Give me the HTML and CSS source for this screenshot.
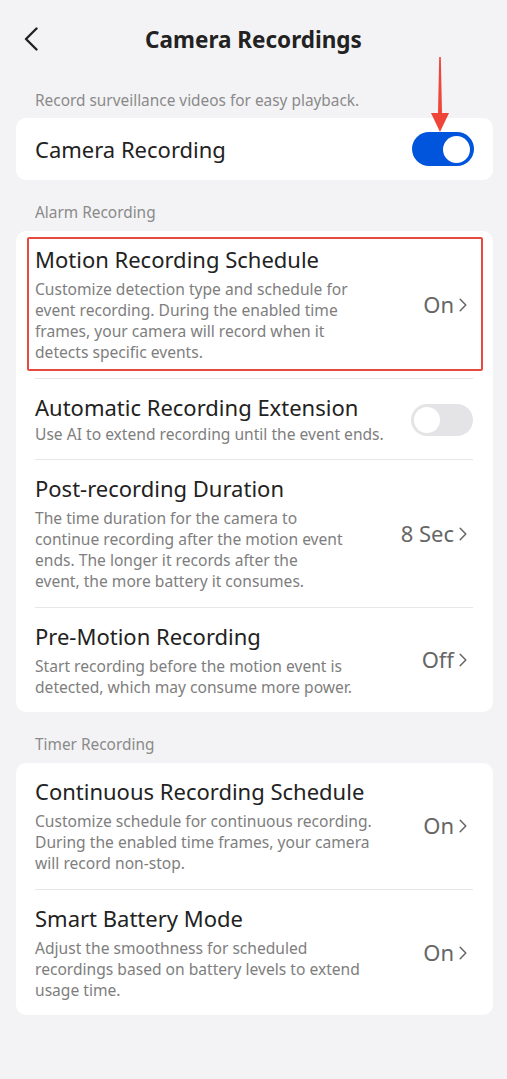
FILE: index.html
```html
<!DOCTYPE html>
<html lang="en">
<head>
<meta charset="utf-8">
<title>Camera Recordings</title>
<link rel="stylesheet" href="styles.css">
</head>
<body>
<div class="screen">
  <header class="topbar">
    <button class="back" aria-label="Back">
      <svg width="14" height="24" viewBox="0 0 14 24"><polyline points="12.5,1.5 2,12 12.5,22.5" fill="none" stroke="#222" stroke-width="2.4" stroke-linecap="round" stroke-linejoin="round"/></svg>
    </button>
    <h1 class="title">Camera Recordings</h1>
    <span></span>
  </header>

  <p class="section-label first">Record surveillance videos for easy playback.</p>
  <section class="card">
    <div class="row simple">
      <div class="row-text"><div class="row-title">Camera Recording</div></div>
      <div class="toggle on">
        <svg class="pointer" width="20" height="75" viewBox="0 0 20 75"><polygon points="9.2,0 10.8,0 12,56 19,56 10,75 1,56 8,56" fill="#ee4538"/></svg>
        <span class="knob"></span>
      </div>
    </div>
  </section>

  <p class="section-label">Alarm Recording</p>
  <section class="card">
    <div class="row">
      <span class="highlight"></span>
      <div class="row-text">
        <div class="row-title">Motion Recording Schedule</div>
        <div class="row-desc">Customize detection type and schedule for<br>event recording. During the enabled time<br>frames, your camera will record when it<br>detects specific events.</div>
      </div>
      <div class="value">On <svg class="chev" width="8" height="14" viewBox="0 0 8 14"><polyline points="1.2,1.2 6.8,7 1.2,12.8" fill="none" stroke="#666" stroke-width="1.5" stroke-linecap="round" stroke-linejoin="round"/></svg></div>
    </div>
    <div class="row divided">
      <div class="row-text">
        <div class="row-title">Automatic Recording Extension</div>
        <div class="row-desc tight">Use AI to extend recording until the event ends.</div>
      </div>
      <div class="toggle off"><span class="knob"></span></div>
    </div>
    <div class="row divided">
      <div class="row-text">
        <div class="row-title">Post-recording Duration</div>
        <div class="row-desc">The time duration for the camera to<br>continue recording after the motion event<br>ends. The longer it records after the<br>event, the more battery it consumes.</div>
      </div>
      <div class="value">8 Sec <svg class="chev" width="8" height="14" viewBox="0 0 8 14"><polyline points="1.2,1.2 6.8,7 1.2,12.8" fill="none" stroke="#666" stroke-width="1.5" stroke-linecap="round" stroke-linejoin="round"/></svg></div>
    </div>
    <div class="row divided">
      <div class="row-text">
        <div class="row-title">Pre-Motion Recording</div>
        <div class="row-desc">Start recording before the motion event is<br>detected, which may consume more power.</div>
      </div>
      <div class="value">Off <svg class="chev" width="8" height="14" viewBox="0 0 8 14"><polyline points="1.2,1.2 6.8,7 1.2,12.8" fill="none" stroke="#666" stroke-width="1.5" stroke-linecap="round" stroke-linejoin="round"/></svg></div>
    </div>
  </section>

  <p class="section-label">Timer Recording</p>
  <section class="card">
    <div class="row">
      <div class="row-text">
        <div class="row-title">Continuous Recording Schedule</div>
        <div class="row-desc">Customize schedule for continuous recording.<br>During the enabled time frames, your camera<br>will record non-stop.</div>
      </div>
      <div class="value">On <svg class="chev" width="8" height="14" viewBox="0 0 8 14"><polyline points="1.2,1.2 6.8,7 1.2,12.8" fill="none" stroke="#666" stroke-width="1.5" stroke-linecap="round" stroke-linejoin="round"/></svg></div>
    </div>
    <div class="row divided">
      <div class="row-text">
        <div class="row-title">Smart Battery Mode</div>
        <div class="row-desc">Adjust the smoothness for scheduled<br>recordings based on battery levels to extend<br>usage time.</div>
      </div>
      <div class="value">On <svg class="chev" width="8" height="14" viewBox="0 0 8 14"><polyline points="1.2,1.2 6.8,7 1.2,12.8" fill="none" stroke="#666" stroke-width="1.5" stroke-linecap="round" stroke-linejoin="round"/></svg></div>
    </div>
  </section>
</div>
</body>
</html>
```

FILE: styles.css
```css
* { box-sizing: border-box; }

html, body {
  margin: 0;
  padding: 0;
  background: #f3f3f5;
}

body {
  font-family: "Noto Sans", "Open Sans", sans-serif;
  color: #222;
}

.screen {
  width: 507px;
  min-height: 1079px;
  padding: 0 14px 40px 16px;
}

.topbar {
  height: 80px;
  display: grid;
  grid-template-columns: 1fr auto 1fr;
  align-items: center;
  margin: 0 -14px 0 -16px;
}

.back {
  justify-self: start;
  margin-left: 24px;
  margin-top: -2px;
  padding: 0;
  border: 0;
  background: none;
  display: flex;
}

.title {
  margin: 0;
  font-size: 22.5px;
  font-weight: 700;
  line-height: 26px;
  color: #222;
}

.section-label {
  margin: 23px 0 8px 19px;
  font-size: 15.4px;
  line-height: 20px;
  color: #8a8a8a;
}

.section-label.first {
  margin-top: 11px;
  margin-bottom: 7px;
}

.card {
  background: #fff;
  border-radius: 10px;
}

.row {
  position: relative;
  display: flex;
  align-items: center;
  justify-content: space-between;
  padding: 16px 20px 14.5px 19px;
}

.row.divided {
  padding-top: 17px;
}

.row.simple {
  height: 62px;
  padding: 0 19px 0 19px;
}

.row.divided::before {
  content: "";
  position: absolute;
  top: 0;
  left: 19px;
  right: 20px;
  height: 1px;
  background: #e7e7e9;
}

.row-title {
  font-size: 22px;
  line-height: 24px;
  color: #222;
  white-space: nowrap;
}

.row-desc {
  margin-top: 8px;
  font-size: 15.6px;
  line-height: 21px;
  color: #7e7e7e;
  white-space: nowrap;
}

.row-desc.tight {
  margin-top: 5px;
}

.value {
  display: flex;
  align-items: center;
  gap: 5px;
  font-size: 22px;
  color: #666;
  white-space: nowrap;
  margin-right: 6px;
  margin-top: -3px;
}

.chev { display: block; margin-top: 2px; }

.toggle {
  position: relative;
  flex: none;
  width: 62px;
  border-radius: 17px;
}

.toggle.on {
  height: 34px;
  background: #0055dc;
}

.toggle.on .knob {
  position: absolute;
  right: 4px;
  top: 3.5px;
  width: 27px;
  height: 27px;
  border-radius: 50%;
  background: #fff;
}

.toggle.off {
  height: 32px;
  background: #e4e4e6;
}

.toggle.off .knob {
  position: absolute;
  left: 3px;
  top: 3px;
  width: 26px;
  height: 26px;
  border-radius: 50%;
  background: #fff;
}

.pointer {
  position: absolute;
  left: 18px;
  top: -75px;
}

.highlight {
  position: absolute;
  left: 11px;
  right: 10px;
  top: 6px;
  bottom: 7px;
  border: 2.5px solid #e84a40;
  border-radius: 2px;
  pointer-events: none;
}
```
